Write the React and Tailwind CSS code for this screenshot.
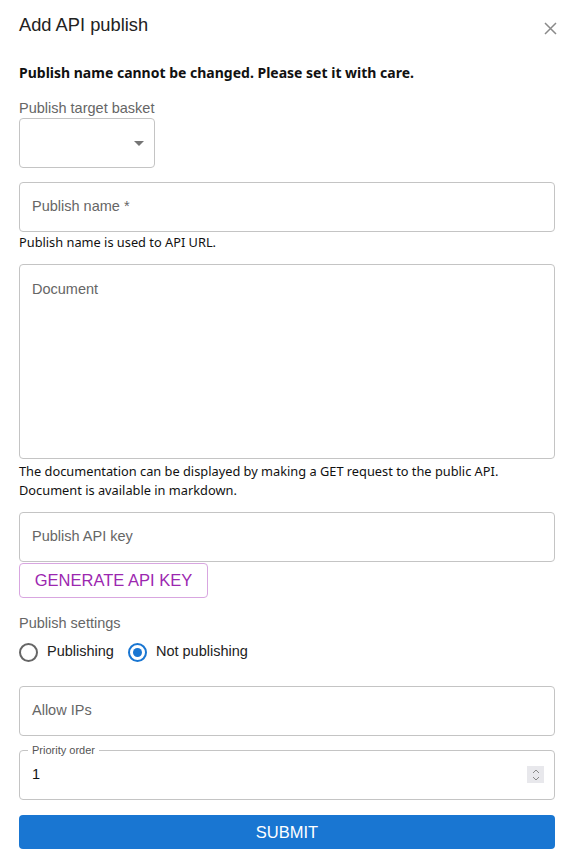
import React from "react";

const arial = { fontFamily: '"Liberation Sans", Arial, sans-serif' };
const noto = { fontFamily: '"Noto Sans", sans-serif' };

function Input({ placeholder }) {
  return (
    <div className="h-[50px] w-full rounded border border-[#c4c4c4] flex items-center px-[12px]">
      <span className="text-[14.5px] text-[#666]">{placeholder}</span>
    </div>
  );
}

export default function App() {
  return (
    <div className="w-[574px] h-[863px] bg-white" style={arial}>
      <div className="px-[19px] pt-[13px]">
        <div className="flex items-start justify-between">
          <h2 className="text-[18.3px] leading-[24px] text-[#222]">Add API publish</h2>
          <svg width="13" height="13" viewBox="0 0 13 13" className="mt-[9px] mr-[-2px]">
            <path d="M1 1 L12 12 M12 1 L1 12" stroke="#8a8a8a" strokeWidth="1.5" />
          </svg>
        </div>
        <p className="mt-[25px] text-[14px] leading-[22px] font-bold text-[#111]" style={noto}>
          Publish name cannot be changed. Please set it with care.
        </p>
        <div className="mt-[15px] text-[14.5px] leading-[18px] text-[#666]">Publish target basket</div>
        <div className="mt-[1px] w-[136px] h-[50px] rounded border border-[#c4c4c4] flex items-center justify-end pr-[10px]">
          <svg width="10" height="5" viewBox="0 0 10 5">
            <path d="M0 0 L10 0 L5 5 Z" fill="#757575" />
          </svg>
        </div>
        <div className="mt-[14px]">
          <Input placeholder="Publish name *" />
        </div>
        <p className="mt-[1px] text-[12.8px] leading-[18px] text-[#111]" style={noto}>
          Publish name is used to API URL.
        </p>
        <div className="mt-[13px] h-[195px] w-full rounded border border-[#c4c4c4] px-[12px] pt-[12px]">
          <span className="text-[14.5px] text-[#666]">Document</span>
        </div>
        <p className="mt-[3px] text-[12.8px] leading-[19px] text-[#111]" style={noto}>
          The documentation can be displayed by making a GET request to the public API.
          <br />
          Document is available in markdown.
        </p>
        <div className="mt-[12px]">
          <Input placeholder="Publish API key" />
        </div>
        <button className="mt-[1px] h-[35px] w-[189px] rounded border border-[#d8a6e0] text-[#9c27b0] text-[16.5px] flex items-center justify-center">
          GENERATE API KEY
        </button>
        <div className="mt-[16px] text-[14.5px] leading-[18px] text-[#666]">Publish settings</div>
        <div className="mt-[8px] flex items-center h-[24px]">
          <span className="w-[19px] h-[19px] rounded-full border-2 border-[#666]" />
          <span className="ml-[9px] text-[14.5px] text-[#222]">Publishing</span>
          <span className="ml-[14px] w-[19px] h-[19px] rounded-full border-2 border-[#1976d2] flex items-center justify-center">
            <span className="w-[9px] h-[9px] rounded-full bg-[#1976d2]" />
          </span>
          <span className="ml-[9px] text-[14.5px] text-[#222]">Not publishing</span>
        </div>
        <div className="mt-[22px]">
          <Input placeholder="Allow IPs" />
        </div>
        <fieldset className="mt-[10px] h-[54px] w-full rounded border border-[#c4c4c4] px-[8px]">
          <legend className="px-[4px] text-[11px] leading-[8px] text-[#555]">Priority order</legend>
          <div className="flex items-center justify-between pl-[4px] pr-[2px] mt-[10px]">
            <span className="text-[14.5px] text-[#111]">1</span>
            <span className="w-[17px] h-[17px] bg-[#e8e8ec] flex items-center justify-center">
              <svg width="8" height="12" viewBox="0 0 8 12">
                <path d="M1 4 L4 1 L7 4 M1 8 L4 11 L7 8" stroke="#888" strokeWidth="1" fill="none" />
              </svg>
            </span>
          </div>
        </fieldset>
        <button className="mt-[15px] h-[34px] w-full rounded bg-[#1976d2] text-white text-[16.5px] flex items-center justify-center">
          SUBMIT
        </button>
      </div>
    </div>
  );
}
